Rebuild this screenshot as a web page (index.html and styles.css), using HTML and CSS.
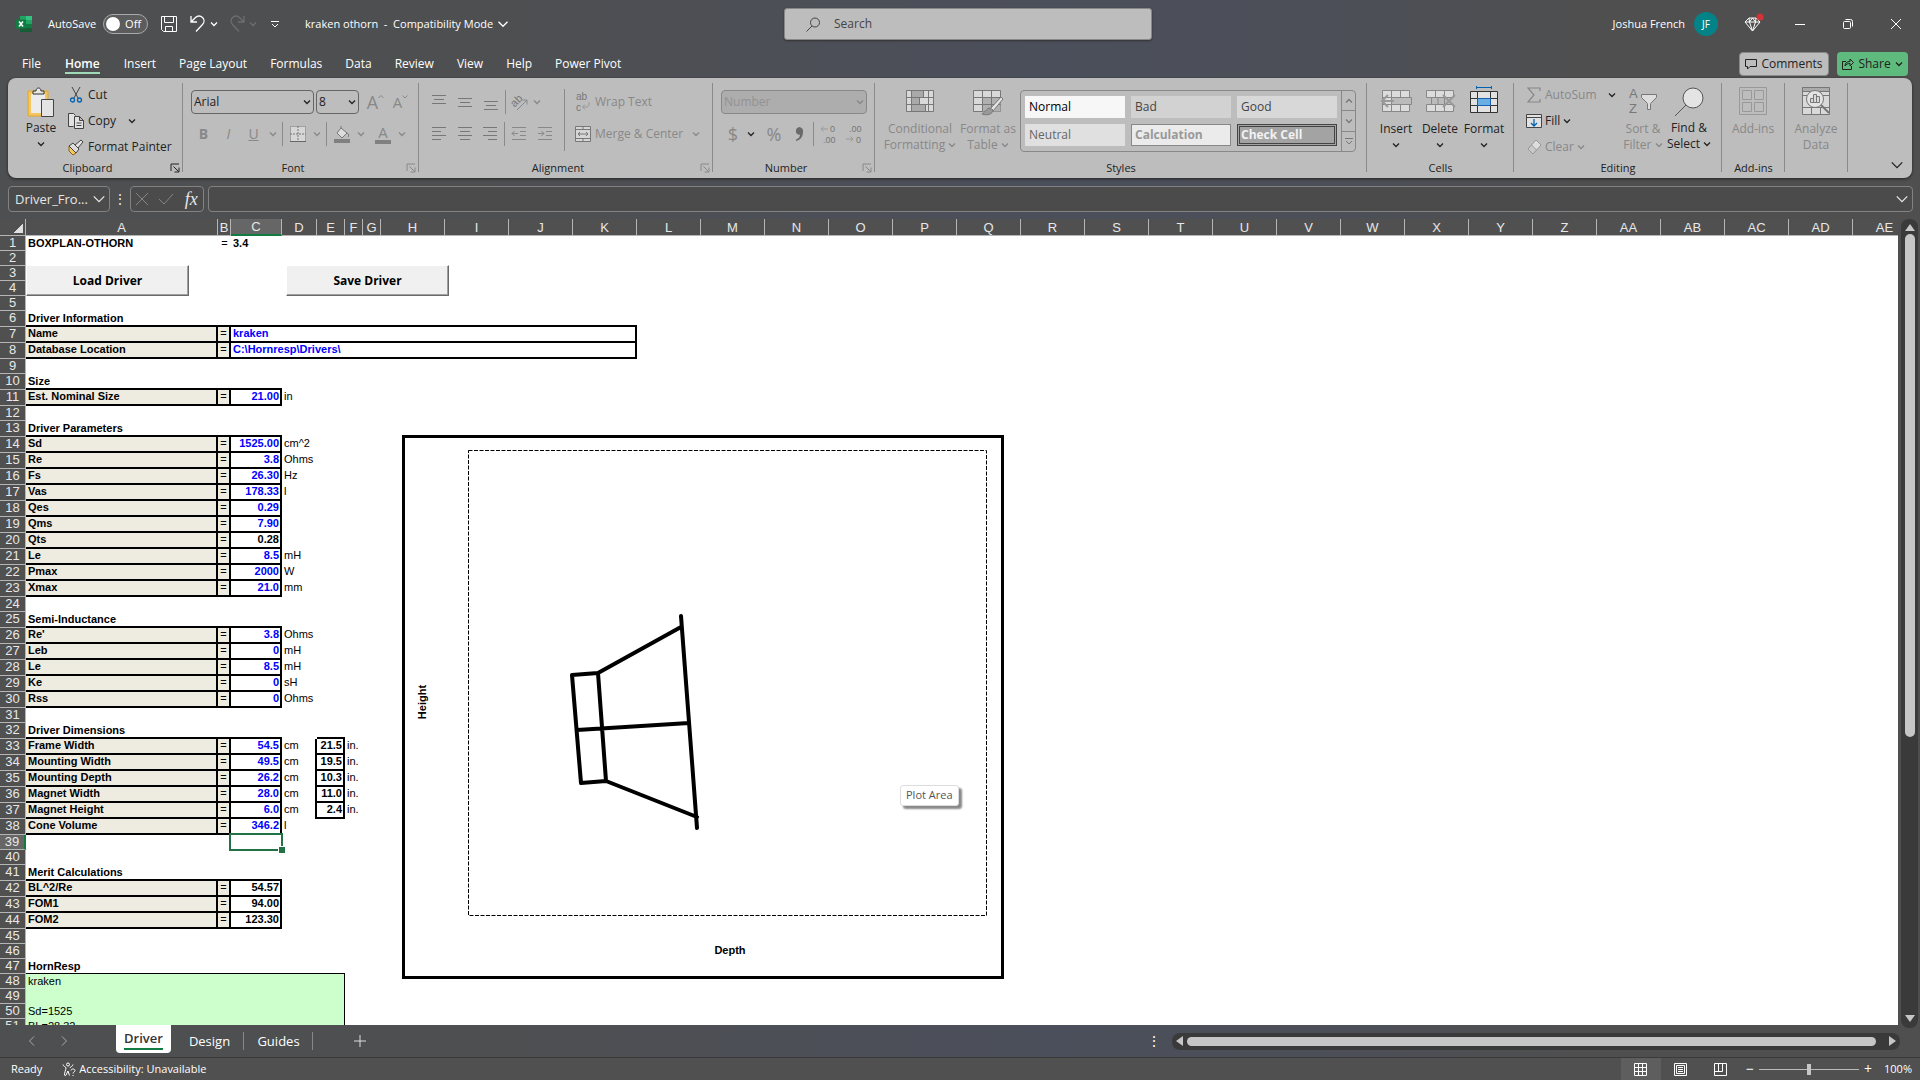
FILE: index.html
```
<!DOCTYPE html>
<html lang="en">
<head>
  <meta charset="UTF-8" />
  <meta name="viewport" content="width=device-width, initial-scale=1.0">
  <title>kraken othorn - Excel</title>
  <link rel="stylesheet" href="styles.css">
</head>
<body>

  <!-- Shared icons -->
  <svg class="defs" aria-hidden="true">
    <symbol id="chev" viewBox="0 0 8 8"><path d="M1 2.500l3 3 3-3" fill="none" stroke="currentColor" stroke-width="1.300" vector-effect="non-scaling-stroke"/></symbol>
    <symbol id="launch" viewBox="0 0 10 10"><path d="M1 8V1h8M3.500 3.500l5 5M9 4.500v4.500H4.500" fill="none" stroke="currentColor"/></symbol>
  </svg>

  <header class="titlebar">
    <div class="title-left">
      <svg class="logo" width="16" height="16" viewBox="0 0 16 16"><path fill="#21a366" d="M4 0h12v16H4z"/><path fill="#33c481" d="M10 0h6v4h-6z"/><path fill="#107c41" d="M4 4h6v8H4zM10 8h6v4h-6z"/><path fill="#185c37" d="M4 12h12v4H4z"/><path fill="#107c41" d="M0 3.500h10v9H0z"/><path d="M3 5.500l4 5M7 5.500l-4 5" stroke="#fff" stroke-width="1.500"/></svg>
      <label class="autosave" for="autosave">AutoSave</label>
      <span class="toggle"><input type="checkbox" id="autosave"><span>Off</span></span>
      <button class="tb save" aria-label="Save"><svg width="16" height="16" viewBox="0 0 16 16" fill="none" stroke="#fff"><path d="M.5.5h15v15h-13l-2-2zM3.500.5v6h9v-6M4.500 15.500v-5h7v5"/></svg></button>
      <button class="tb undo" aria-label="Undo"><svg width="16" height="18" viewBox="0 0 16 18" fill="none" stroke="#fff" stroke-width="1.300"><path d="M1 1v6h6M1 7l4.500-4.500c2-2 5-2 7 0s2 5 0 7L6 16.500"/></svg></button>
      <svg class="chev light" width="8" height="8"><use href="#chev"/></svg>
      <button class="tb redo" aria-label="Redo" disabled><svg width="16" height="18" viewBox="0 0 16 18" fill="none" stroke="#6d6e70" stroke-width="1.300"><path d="M15 1v6H9M15 7l-4.500-4.500c-2-2-5-2-7 0s-2 5 0 7L10 16.500"/></svg></button>
      <svg class="chev faint" width="8" height="8"><use href="#chev"/></svg>
      <button class="tb customize" aria-label="Customize Quick Access Toolbar"><svg width="8" height="8" viewBox="0 0 8 8" fill="none" stroke="#fff"><path d="M0 1.500h8M1 4l3 3 3-3"/></svg></button>
      <button class="doc-title"><span>kraken othorn&nbsp; -&nbsp; Compatibility Mode</span><svg width="12" height="12"><use href="#chev"/></svg></button>
    </div>

    <div class="search">
      <svg width="15" height="15" viewBox="0 0 15 15" fill="none" stroke="#444"><circle cx="9" cy="5.500" r="4.500"/><path d="M6 9l-5.500 5.500"/></svg>
      <input type="text" placeholder="Search" aria-label="Search">
    </div>

    <div class="title-right">
      <span class="user">Joshua French</span>
      <button class="avatar">JF</button>
      <button class="win gem" aria-label="Premium"><svg width="20" height="20" viewBox="0 0 20 20" fill="none" stroke="#fff"><path d="M6 4h7l4 4-7.500 9L2 8zM2 8h15M6.500 8l3 9 3-9M6 4l.5 4 3-4 3 4L13 4"/><circle cx="17" cy="3" r="3.500" fill="#d13438" stroke="none"/></svg></button>
      <button class="win" aria-label="Minimize"><svg width="10" height="10" viewBox="0 0 10 10" stroke="#fff"><path d="M0 5.500h10"/></svg></button>
      <button class="win" aria-label="Restore"><svg width="10" height="10" viewBox="0 0 10 10" fill="none" stroke="#fff"><rect x=".5" y="2.500" width="7" height="7" rx="1"/><path d="M2.500.5h5a2 2 0 0 1 2 2v5"/></svg></button>
      <button class="win" aria-label="Close"><svg width="10" height="10" viewBox="0 0 10 10" stroke="#fff"><path d="M0 0l10 10M10 0L0 10"/></svg></button>
    </div>
  </header>

  <nav class="tabs">
    <a href="#">File</a>
    <a href="#" class="active">Home</a>
    <a href="#">Insert</a>
    <a href="#">Page Layout</a>
    <a href="#">Formulas</a>
    <a href="#">Data</a>
    <a href="#">Review</a>
    <a href="#">View</a>
    <a href="#">Help</a>
    <a href="#">Power Pivot</a>
    <div class="tab-actions">
      <button class="comments"><svg width="12" height="12" viewBox="0 0 12 12" fill="none" stroke="#222"><path d="M.5 1.500h11v7H5l-2.500 2.500V8.500h-2z"/></svg>Comments</button>
      <button class="share"><svg width="12" height="12" viewBox="0 0 12 12" fill="none" stroke="#222"><path d="M4 3.500H.5v8h9V8M3 8c0-3 2-4.500 5-4.500V1l3.500 3.500L8 8V5.500C6 5.500 4 6 3 8z"/></svg>Share<svg width="8" height="8"><use href="#chev"/></svg></button>
    </div>
  </nav>

  <section class="ribbon">
    <div class="group clipboard">
      <div class="body">
        <button class="big tall paste">
          <svg width="30" height="30" viewBox="0 0 30 30"><path d="M2 4h20v25H2z" fill="#f3c65f" stroke="#e0a62c"/><path d="M5 7h14v19H5z" fill="#ececec"/><path d="M7 6V4h3c0-4 5-4 5 0h3v3H7z" fill="#e8e8e8" stroke="#333"/><path d="M15.500 12.500h12v17h-12z" fill="#e4e4e4" stroke="#444"/></svg>
          <span>Paste</span>
          <svg width="8" height="8"><use href="#chev"/></svg>
        </button>
        <div class="stack">
          <button><svg width="16" height="16" viewBox="0 0 16 16" fill="none"><path d="M4 0l6 11M12 0L6 11" stroke="#444"/><circle cx="4.500" cy="13" r="2" stroke="#0063b1" stroke-width="1.300"/><circle cx="11.500" cy="13" r="2" stroke="#0063b1" stroke-width="1.300"/></svg>Cut</button>
          <button><svg width="16" height="16" viewBox="0 0 16 16" fill="#e2e2e2" stroke="#444"><path d="M5.500 13.500h-5V.5h5l2 2"/><path d="M6.500 3.500h5l4 4v8h-9zM11.500 3.500v4h4M8.500 10h5M8.500 12.500h5"/></svg>Copy<svg class="gap" width="8" height="8"><use href="#chev"/></svg></button>
          <button><svg width="16" height="16" viewBox="0 0 16 16"><path d="M1 7l7 7-3 2-4-4z" fill="#f3c65f" stroke="#8a6414"/><path d="M1 7l4-3 6 6-3 4z" fill="#ddd" stroke="#444"/><path d="M7 6l6-5 2 2-5 6z" fill="#e2e2e2" stroke="#444"/></svg>Format Painter</button>
        </div>
      </div>
      <h2>Clipboard</h2>
      <button class="launcher" aria-label="Clipboard options"><svg width="10" height="10"><use href="#launch"/></svg></button>
    </div>

    <div class="group font">
      <div class="body rows">
        <div class="row">
          <span class="combo family"><select aria-label="Font"><option>Arial</option></select><svg width="8" height="8"><use href="#chev"/></svg></span>
          <span class="combo size"><select aria-label="Font size"><option>8</option></select><svg width="8" height="8"><use href="#chev"/></svg></span>
          <button class="ic dim big-a" disabled>A<svg width="6" height="16" viewBox="0 0 6 16" fill="none" stroke="currentColor"><path d="M.5 4L3 1.500 5.500 4"/></svg></button>
          <button class="ic dim small-a" disabled>A<svg width="6" height="16" viewBox="0 0 6 16" fill="none" stroke="currentColor"><path d="M.5 1.500L3 4l2.500-2.500"/></svg></button>
        </div>
        <div class="row dim">
          <button class="ic" disabled><b>B</b></button>
          <button class="ic" disabled><i>I</i></button>
          <button class="ic" disabled><u>U</u></button>
          <svg class="drop" width="8" height="8"><use href="#chev"/></svg>
          <i class="bar"></i>
          <button class="ic" disabled aria-label="Borders"><svg width="16" height="16" viewBox="0 0 16 16" fill="none" stroke="#777"><path d="M.5.5h15v15H.5z" fill="#d6d6d6" stroke-dasharray="1 1"/><path d="M8 0v15M0 8h16" stroke-dasharray="2 1"/><path d="M0 15.500h16" stroke="#666"/></svg></button>
          <svg class="drop" width="8" height="8"><use href="#chev"/></svg>
          <i class="bar"></i>
          <button class="ic" disabled aria-label="Fill color"><svg width="16" height="17" viewBox="0 0 16 17"><path d="M0 13h16v4H0z" fill="#808080"/><path d="M7 2l6 5-5 5-5-5 4-5V0M13 7c2 1 2 3 1 4" fill="#ddd" stroke="#777"/></svg></button>
          <svg class="drop" width="8" height="8"><use href="#chev"/></svg>
          <button class="ic font-color" disabled>A</button>
          <svg class="drop" width="8" height="8"><use href="#chev"/></svg>
        </div>
      </div>
      <h2>Font</h2>
      <button class="launcher dim" aria-label="Font options"><svg width="10" height="10"><use href="#launch"/></svg></button>
    </div>

    <div class="group alignment">
      <div class="body dim">
        <div class="rows block">
          <div class="row">
            <button class="ic" disabled aria-label="Top"><svg width="16" height="16" viewBox="0 0 16 16" stroke="#777"><path d="M1 1.500h14M3 5.500h10M1 9.500h14"/></svg></button>
            <button class="ic" disabled aria-label="Middle"><svg width="16" height="16" viewBox="0 0 16 16" stroke="#777"><path d="M1 4.500h14M3 8.500h10M1 12.500h14"/></svg></button>
            <button class="ic" disabled aria-label="Bottom"><svg width="16" height="16" viewBox="0 0 16 16" stroke="#777"><path d="M1 7.500h14M3 11.500h10M1 15.500h14"/></svg></button>
            <i class="bar"></i>
            <button class="ic" disabled aria-label="Orientation"><svg width="18" height="18" viewBox="0 0 18 18" fill="none" stroke="#888"><text x="0" y="12" transform="rotate(-45 5 9)" font-size="11">ab</text><path d="M6 17L16 7M11.500 7H16v4.500"/></svg></button>
            <svg class="drop tight" width="8" height="8"><use href="#chev"/></svg>
          </div>
          <div class="row">
            <button class="ic" disabled aria-label="Left"><svg width="16" height="16" viewBox="0 0 16 16" stroke="#777"><path d="M1 1.500h14M1 5.500h9M1 9.500h14M1 13.500h9"/></svg></button>
            <button class="ic" disabled aria-label="Center"><svg width="16" height="16" viewBox="0 0 16 16" stroke="#777"><path d="M1 1.500h14M3 5.500h10M1 9.500h14M3 13.500h10"/></svg></button>
            <button class="ic" disabled aria-label="Right"><svg width="16" height="16" viewBox="0 0 16 16" stroke="#777"><path d="M1 1.500h14M6 5.500h9M1 9.500h14M6 13.500h9"/></svg></button>
            <i class="bar"></i>
            <button class="ic" disabled aria-label="Decrease indent"><svg width="16" height="16" viewBox="0 0 16 16" fill="none" stroke="#888"><path d="M1 1.500h14M9 5.500h6M9 9.500h6M1 13.500h14M7 7.500H1M3.500 5L1 7.500 3.500 10"/></svg></button>
            <button class="ic" disabled aria-label="Increase indent"><svg width="16" height="16" viewBox="0 0 16 16" fill="none" stroke="#888"><path d="M1 1.500h14M9 5.500h6M9 9.500h6M1 13.500h14M1 7.500h6M4.500 5L7 7.500 4.500 10"/></svg></button>
          </div>
        </div>
        <div class="rows wrap">
          <div class="row"><button disabled><svg width="16" height="20" viewBox="0 0 16 20" fill="none" stroke="#999"><text x="1" y="8" font-size="10">ab</text><text x="1" y="19" font-size="10">c</text><path d="M14 10v2c0 2-1 3-3 3H8M10 12.500L7.500 15l2.500 2.500"/></svg>Wrap Text</button></div>
          <div class="row"><button disabled><svg width="16" height="16" viewBox="0 0 16 16" fill="#d6d6d6" stroke="#777"><path d="M.5.5h15v15H.5zM.5 3.500h15M.5 12.500h15M8 .5v3M8 12.500v3M3 8h10M5 6L3 8l2 2M11 6l2 2-2 2"/></svg>Merge &amp; Center</button><svg class="drop" width="8" height="8"><use href="#chev"/></svg></div>
        </div>
      </div>
      <h2>Alignment</h2>
      <button class="launcher dim" aria-label="Alignment options"><svg width="10" height="10"><use href="#launch"/></svg></button>
    </div>

    <div class="group number">
      <div class="body rows dim">
        <div class="row"><span class="combo format"><select aria-label="Number format" disabled><option>Number</option></select><svg width="8" height="8"><use href="#chev"/></svg></span></div>
        <div class="row">
          <button class="ic sign" disabled>$</button>
          <svg class="drop dark" width="8" height="8"><use href="#chev"/></svg>
          <button class="ic sign" disabled>%</button>
          <button class="ic comma" disabled aria-label="Comma style"><svg width="8" height="14" viewBox="0 0 8 14"><path d="M4 0a4 4 0 0 0-1 7.500c1 .5 2 0 2 0 0 2-1 4-4 5v1.500c5-1 7-5 7-9A4 4 0 0 0 4 0z" fill="#6a6a6a"/></svg></button>
          <i class="bar"></i>
          <button class="ic" disabled aria-label="Increase decimal"><svg width="17" height="20" viewBox="0 0 17 20" fill="none" stroke="#999"><text x="10" y="8" font-size="9">0</text><text x="3" y="19" font-size="9">.00</text><path d="M8 5H1M3.500 2.500L1 5l2.500 2.500"/></svg></button>
          <button class="ic" disabled aria-label="Decrease decimal"><svg width="17" height="20" viewBox="0 0 17 20" fill="none" stroke="#999"><text x="3" y="8" font-size="9">.00</text><text x="10" y="19" font-size="9">0</text><path d="M0 15h7M4.500 12.500L7 15l-2.500 2.500"/></svg></button>
        </div>
      </div>
      <h2>Number</h2>
      <button class="launcher dim" aria-label="Number options"><svg width="10" height="10"><use href="#launch"/></svg></button>
    </div>

    <div class="group styles">
      <div class="body">
        <button class="big dim" disabled>
          <svg width="28" height="28" viewBox="0 0 28 28" fill="#d9d9d9" stroke="#777"><path d="M.5 3.500h27v21H.5z"/><path d="M5.500 3.500h12v7h-12zM5.500 10.500h8v7h-8zM5.500 17.500h14v7h-14z" fill="#a9a9a9"/><path d="M5.500 3.500v21M22.500 3.500v21M.5 10.500h27M.5 17.500h27" fill="none"/></svg>
          <span>Conditional<br>Formatting <svg width="8" height="8"><use href="#chev"/></svg></span>
        </button>
        <button class="big dim" disabled>
          <svg width="30" height="28" viewBox="0 0 30 28" fill="#d9d9d9" stroke="#777"><path d="M.5 3.500h27v21H.5z"/><path d="M9.500 10.500h18v14h-18z" fill="#b0b0b0" stroke="none"/><path d="M9.500 3.500v21M18.500 3.500v21M.5 10.500h27M.5 17.500h27" fill="none"/><path d="M28 10L17 22l3 2 10-12z" fill="#e3e3e3"/><path d="M17 21c-3 0-4 3-8 6 5 2 11 0 11-4z" fill="#999"/></svg>
          <span>Format as<br>Table <svg width="8" height="8"><use href="#chev"/></svg></span>
        </button>
        <div class="gallery">
          <div class="swatches">
            <button class="normal">Normal</button>
            <button class="bad">Bad</button>
            <button class="good">Good</button>
            <button class="neutral">Neutral</button>
            <button class="calc">Calculation</button>
            <button class="check">Check Cell</button>
          </div>
          <div class="gallery-nav">
            <button aria-label="Previous styles"><svg class="flip" width="8" height="8"><use href="#chev"/></svg></button>
            <button aria-label="Next styles"><svg width="8" height="8"><use href="#chev"/></svg></button>
            <button aria-label="More styles"><svg width="8" height="8" viewBox="0 0 8 8" fill="none" stroke="currentColor"><path d="M0 1.500h8M1 4l3 3 3-3"/></svg></button>
          </div>
        </div>
      </div>
      <h2>Styles</h2>
    </div>

    <div class="group cells">
      <div class="body">
        <button class="big">
          <svg width="32" height="28" viewBox="0 0 32 28" fill="#dcdcdc" stroke="#888"><path d="M2.500 3.500h27v21h-27zM11.500 3.500v21M20.500 3.500v21M2.500 10.500h27M2.500 17.500h27"/><path d="M11.500 10.500h20v7h-20z" fill="#bbb"/><path d="M14 14H2M8 8l-6 6 6 6" fill="none" stroke="#999" stroke-width="2"/></svg>
          <span>Insert</span><svg width="8" height="8"><use href="#chev"/></svg>
        </button>
        <button class="big">
          <svg width="32" height="28" viewBox="0 0 32 28" fill="#dcdcdc" stroke="#888"><path d="M2.500 3.500h27v7h-27zM2.500 17.500h27v7h-27zM11.500 3.500v7M20.500 3.500v7M11.500 17.500v7M20.500 17.500v7"/><path d="M7.500 10.500h13v7h-13zM14 10.500v7" fill="#bbb"/><path d="M19 8l12 12M31 8L19 20" fill="none" stroke="#999" stroke-width="2"/></svg>
          <span>Delete</span><svg width="8" height="8"><use href="#chev"/></svg>
        </button>
        <button class="big">
          <svg width="28" height="28" viewBox="0 0 28 28" fill="#e2e2e2" stroke="#333"><path d="M.5 4.500h27v21H.5zM7.500 4.500v21M20.500 4.500v21M.5 11.500h27M.5 18.500h27"/><path d="M7.500 11.500h13v7h-13z" fill="#69afe5" stroke="#1a5fb4"/><path d="M6.500-1v3M21.500-1v3M6.500.5h15" stroke="#0063b1"/></svg>
          <span>Format</span><svg width="8" height="8"><use href="#chev"/></svg>
        </button>
      </div>
      <h2>Cells</h2>
    </div>

    <div class="group editing">
      <div class="body">
        <div class="stack">
          <button class="dim" disabled><svg width="16" height="16" viewBox="0 0 16 16" fill="none" stroke="#888" stroke-width="1.200"><path d="M14 4V1H2l6 7-6 7h12v-3"/></svg>AutoSum<svg class="gap dark" width="8" height="8"><use href="#chev"/></svg></button>
          <button><svg width="16" height="16" viewBox="0 0 16 16" fill="#e2e2e2" stroke="#444"><path d="M.5 1.500h15v13H.5zM.5 4.500h15"/><path d="M8 6v7M5 10l3 3 3-3" fill="none" stroke="#0063b1" stroke-width="1.300"/></svg>Fill<svg width="8" height="8"><use href="#chev"/></svg></button>
          <button class="dim" disabled><svg width="16" height="16" viewBox="0 0 16 16" fill="#dedede" stroke="#999"><path d="M10 1l5 5-8 9-5-5z"/><path d="M5.500 6l5 5L7 15l-5-5z" fill="#c9c9c9"/></svg>Clear<svg width="8" height="8"><use href="#chev"/></svg></button>
        </div>
        <button class="big dim" disabled>
          <svg width="30" height="28" viewBox="0 0 30 28" fill="none" stroke="#777"><text x="1" y="11" font-size="13">A</text><text x="1" y="26" font-size="13">Z</text><path d="M13.500 7.500h15v3l-6 6v6h-3v-6l-6-6z" fill="#dedede"/></svg>
          <span>Sort &amp;<br>Filter <svg width="8" height="8"><use href="#chev"/></svg></span>
        </button>
        <button class="big tall">
          <svg width="30" height="30" viewBox="0 0 30 30" fill="#e4e4e4" stroke="#555"><circle cx="19" cy="11" r="10"/><path d="M12 18L1 29"/></svg>
          <span>Find &amp;<br>Select <svg width="8" height="8"><use href="#chev"/></svg></span>
        </button>
      </div>
      <h2>Editing</h2>
    </div>

    <div class="group addins">
      <div class="body">
        <button class="big dim" disabled>
          <svg width="28" height="28" viewBox="0 0 28 28" fill="none" stroke="#999"><path d="M.5.5h27v27H.5zM3.500 3.500h9v9h-9zM15.500 3.500h9v9h-9zM3.500 15.500h9v9h-9zM15.500 15.500h9v9h-9z"/></svg>
          <span>Add-ins</span>
        </button>
      </div>
      <h2>Add-ins</h2>
    </div>

    <div class="group analyze">
      <div class="body">
        <button class="big dim" disabled>
          <svg width="28" height="28" viewBox="0 0 28 28" fill="#d9d9d9" stroke="#777"><path d="M.5.5h27v27H.5zM.5 8.500h27M.5 20.500h27M9.500 20v7M18.500 20v7"/><path d="M.5.5h27v4H.5z" fill="#aaa"/><circle cx="13" cy="12" r="8.500" fill="#e4e4e4"/><path d="M19 18l8 8" stroke-width="2"/><path d="M8.500 11.500h3v4h-3zM11.500 7.500h3v8h-3zM14.500 9.500h3v6h-3z"/></svg>
          <span>Analyze<br>Data</span>
        </button>
      </div>
    </div>
    <button class="collapse" aria-label="Collapse ribbon"><svg width="14" height="14"><use href="#chev"/></svg></button>
  </section>

  <section class="formula-bar">
    <div class="name-box"><input type="text" value="Driver_Fro..." aria-label="Name box"><svg width="14" height="14"><use href="#chev"/></svg></div>
    <span class="dots">⋮</span>
    <div class="fx">
      <button aria-label="Cancel"><svg width="12" height="12" viewBox="0 0 12 12" stroke="#858585"><path d="M0 0l12 12M12 0L0 12"/></svg></button>
      <button aria-label="Enter"><svg width="16" height="12" viewBox="0 0 16 12" fill="none" stroke="#858585"><path d="M1 6l5 5L15 1"/></svg></button>
      <button class="fn">fx</button>
    </div>
    <div class="formula"><input type="text" aria-label="Formula"><svg width="14" height="14"><use href="#chev"/></svg></div>
  </section>

  <main class="workspace">
    <div class="sheet">
      <table>
        <colgroup>
          <col class="w-head"><col class="w-a"><col class="w-b"><col class="w-c"><col class="w-d"><col class="w-e"><col class="w-f"><col class="w-f">
          <col class="w-std" span="24">
        </colgroup>
        <thead>
          <tr>
            <th class="corner"></th><th>A</th><th>B</th><th class="current">C</th><th>D</th><th>E</th><th>F</th><th>G</th><th>H</th><th>I</th><th>J</th><th>K</th><th>L</th><th>M</th><th>N</th><th>O</th><th>P</th><th>Q</th><th>R</th><th>S</th><th>T</th><th>U</th><th>V</th><th>W</th><th>X</th><th>Y</th><th>Z</th><th>AA</th><th>AB</th><th>AC</th><th>AD</th><th>AE</th>
          </tr>
        </thead>
        <tbody>
          <tr><th>1</th><td class="head">BOXPLAN-OTHORN</td><td class="eq">=</td><td class="head">3.4</td></tr>
          <tr><th>2</th></tr>
          <tr><th>3</th></tr>
          <tr><th>4</th></tr>
          <tr><th>5</th></tr>
          <tr class="top wide"><th>6</th><td>Driver Information</td><td></td><td colspan="9"></td></tr>
          <tr class="data wide"><th>7</th><td>Name</td><td>=</td><td colspan="9">kraken</td></tr>
          <tr class="data wide"><th>8</th><td>Database Location</td><td>=</td><td colspan="9">C:\Hornresp\Drivers\</td></tr>
          <tr><th>9</th></tr>
          <tr class="top"><th>10</th><td>Size</td><td></td><td></td></tr>
          <tr class="data"><th>11</th><td>Est. Nominal Size</td><td>=</td><td>21.00</td><td>in</td></tr>
          <tr><th>12</th></tr>
          <tr class="top"><th>13</th><td>Driver Parameters</td><td></td><td></td></tr>
          <tr class="data"><th>14</th><td>Sd</td><td>=</td><td>1525.00</td><td>cm^2</td></tr>
          <tr class="data"><th>15</th><td>Re</td><td>=</td><td>3.8</td><td>Ohms</td></tr>
          <tr class="data"><th>16</th><td>Fs</td><td>=</td><td>26.30</td><td>Hz</td></tr>
          <tr class="data"><th>17</th><td>Vas</td><td>=</td><td>178.33</td><td>l</td></tr>
          <tr class="data"><th>18</th><td>Qes</td><td>=</td><td>0.29</td></tr>
          <tr class="data"><th>19</th><td>Qms</td><td>=</td><td>7.90</td></tr>
          <tr class="data calc-row"><th>20</th><td>Qts</td><td>=</td><td>0.28</td></tr>
          <tr class="data"><th>21</th><td>Le</td><td>=</td><td>8.5</td><td>mH</td></tr>
          <tr class="data"><th>22</th><td>Pmax</td><td>=</td><td>2000</td><td>W</td></tr>
          <tr class="data"><th>23</th><td>Xmax</td><td>=</td><td>21.0</td><td>mm</td></tr>
          <tr><th>24</th></tr>
          <tr class="top"><th>25</th><td>Semi-Inductance</td><td></td><td></td></tr>
          <tr class="data"><th>26</th><td>Re'</td><td>=</td><td>3.8</td><td>Ohms</td></tr>
          <tr class="data"><th>27</th><td>Leb</td><td>=</td><td>0</td><td>mH</td></tr>
          <tr class="data"><th>28</th><td>Le</td><td>=</td><td>8.5</td><td>mH</td></tr>
          <tr class="data"><th>29</th><td>Ke</td><td>=</td><td>0</td><td>sH</td></tr>
          <tr class="data"><th>30</th><td>Rss</td><td>=</td><td>0</td><td>Ohms</td></tr>
          <tr><th>31</th></tr>
          <tr class="top inches"><th>32</th><td>Driver Dimensions</td><td></td><td></td><td></td><td></td></tr>
          <tr class="data inches"><th>33</th><td>Frame Width</td><td>=</td><td>54.5</td><td>cm</td><td>21.5</td><td>in.</td></tr>
          <tr class="data inches"><th>34</th><td>Mounting Width</td><td>=</td><td>49.5</td><td>cm</td><td>19.5</td><td>in.</td></tr>
          <tr class="data inches"><th>35</th><td>Mounting Depth</td><td>=</td><td>26.2</td><td>cm</td><td>10.3</td><td>in.</td></tr>
          <tr class="data inches"><th>36</th><td>Magnet Width</td><td>=</td><td>28.0</td><td>cm</td><td>11.0</td><td>in.</td></tr>
          <tr class="data inches"><th>37</th><td>Magnet Height</td><td>=</td><td>6.0</td><td>cm</td><td>2.4</td><td>in.</td></tr>
          <tr class="data"><th>38</th><td>Cone Volume</td><td>=</td><td>346.2</td><td>l</td></tr>
          <tr><th class="current">39</th><td></td><td></td><td class="selected"></td></tr>
          <tr><th>40</th></tr>
          <tr class="top"><th>41</th><td>Merit Calculations</td><td></td><td></td></tr>
          <tr class="data calc-row"><th>42</th><td>BL^2/Re</td><td>=</td><td>54.57</td></tr>
          <tr class="data calc-row"><th>43</th><td>FOM1</td><td>=</td><td>94.00</td></tr>
          <tr class="data calc-row"><th>44</th><td>FOM2</td><td>=</td><td>123.30</td></tr>
          <tr><th>45</th></tr>
          <tr><th>46</th></tr>
          <tr class="export-top"><th>47</th><td colspan="5">HornResp</td></tr>
          <tr class="export"><th>48</th><td colspan="5">kraken</td></tr>
          <tr class="export"><th>49</th><td colspan="5"></td></tr>
          <tr class="export"><th>50</th><td colspan="5">Sd=1525</td></tr>
          <tr class="export"><th>51</th><td colspan="5">BL=28.32</td></tr>
        </tbody>
      </table>

      <!-- Objects floating on the sheet -->
      <button class="macro load">Load Driver</button>
      <button class="macro store">Save Driver</button>
      <svg class="chart" viewBox="0 0 602 544" role="img" aria-label="Driver side view">
        <rect x="1.500" y="1.500" width="599" height="541" fill="#fff" stroke="#000" stroke-width="3"/>
        <rect x="66.500" y="15.500" width="518" height="465" fill="none" stroke="#000" stroke-dasharray="4 1.500"/>
        <g fill="none" stroke="#000" stroke-width="4" stroke-linecap="round" stroke-linejoin="round">
          <path d="M279 181l16 212M279 192l-83 46-26 2 9 108 25-2 91 36M196 238l8 108M175 295l112-7"/>
        </g>
        <text x="328" y="519" text-anchor="middle">Depth</text>
        <text x="24" y="267" text-anchor="middle" transform="rotate(-90 24 267)">Height</text>
      </svg>
      <span class="tooltip">Plot Area</span>
    </div>
    <div class="vscroll"><span class="arrow up"></span><span class="thumb"></span><span class="arrow down"></span></div>
  </main>

  <footer class="sheet-tabs">
    <button class="nav" aria-label="Previous sheet"><svg width="8" height="10" viewBox="0 0 8 10" fill="none" stroke="#aaa"><path d="M6 .5L1.500 5 6 9.500"/></svg></button>
    <button class="nav" aria-label="Next sheet"><svg width="8" height="10" viewBox="0 0 8 10" fill="none" stroke="#aaa"><path d="M2 .5L6.500 5 2 9.500"/></svg></button>
    <a href="#" class="sheet-tab active"><span>Driver</span></a>
    <a href="#" class="sheet-tab">Design</a>
    <a href="#" class="sheet-tab">Guides</a>
    <button class="add" aria-label="New sheet"><svg width="12" height="12" viewBox="0 0 12 12" stroke="#ddd"><path d="M6 0v12M0 6h12"/></svg></button>
    <span class="dots">⋮</span>
    <div class="hscroll"><span class="arrow left"></span><span class="thumb"></span><span class="arrow right"></span></div>
  </footer>

  <footer class="status">
    <span>Ready</span>
    <span class="access"><svg width="14" height="15" viewBox="0 0 14 15" fill="none" stroke="#fff"><circle cx="6" cy="2.500" r="1.500"/><path d="M1 2.500c0 2 3 2 3 3.500S2 12 2.500 13s1.500 1 2-1L6 9M11 2.500C11 4.500 8 4.500 8 6M9 8.500c0-2 4-2 4 0 0 1.500-2 1.500-2 3M11 13v1M6 9l1.500 4.500"/></svg>Accessibility: Unavailable</span>
    <div class="views">
      <button class="on" aria-label="Normal view"><svg width="13" height="13" viewBox="0 0 13 13" fill="none" stroke="#fff"><path d="M.5.5h12v12H.5zM4.500.5v12M8.500.5v12M.5 4.500h12M.5 8.500h12"/></svg></button>
      <button aria-label="Page layout view"><svg width="13" height="13" viewBox="0 0 13 13" fill="none" stroke="#fff"><path d="M.5.5h12v12H.5zM2.500 2.500h8v8h-8zM4 4.500h5M4 6.500h5M4 8.500h5"/></svg></button>
      <button aria-label="Page break view"><svg width="13" height="13" viewBox="0 0 13 13" fill="none" stroke="#fff"><path d="M.5.5h12v12H.5zM4.500.5v8M8.500.5v8h-8"/></svg></button>
    </div>
    <div class="zoom"><span>−</span><input type="range" min="10" max="190" value="100" aria-label="Zoom"><span>+</span></div>
    <span class="percent">100%</span>
  </footer>

</body>
</html>
```
FILE: styles.css
```
* {
  box-sizing: border-box;
}

body {
  margin: 0;
  height: 100vh;
  display: flex;
  flex-direction: column;
  overflow: hidden;
  font-family: "Open Sans", "Noto Sans", sans-serif;
  font-size: 12px;
  line-height: 16px;
  color: #fff;
  background: linear-gradient(90deg, #4e4f51 0%, #4e4f51 25%, #4b4f5b 55%, #4c4f57 70%, #4f4f50 82%, #4f4f50 100%);
}

button, input, select {
  font: inherit;
  color: inherit;
  background: none;
  border: none;
  padding: 0;
  margin: 0;
}

button {
  display: inline-flex;
  align-items: center;
  justify-content: center;
  white-space: nowrap;
}

a {
  color: inherit;
  text-decoration: none;
}

svg {
  flex: none;
  overflow: visible;
}

.defs {
  display: none;
}

/* Title bar */
.titlebar {
  display: grid;
  grid-template-columns: 1fr 368px 1fr;
  align-items: center;
  height: 48px;
  padding-left: 16px;
  font-size: 11px;
  flex: none;
}

.title-left,
.title-right {
  display: flex;
  align-items: center;
}

.title-right {
  justify-content: flex-end;
}

.autosave {
  margin: 0 7px 0 16px;
}

.toggle {
  position: relative;
  display: flex;
  align-items: center;
  justify-content: flex-end;
  width: 45px;
  height: 20px;
  padding-right: 6px;
  border: 1px solid #aaa;
  border-radius: 10px;
  background: #5c5c5c;
}

.toggle input {
  position: absolute;
  left: 2px;
  top: 2px;
  width: 14px;
  height: 14px;
  appearance: none;
  background: #fff;
  border-radius: 50%;
}

.save {
  margin-left: 13px;
}

.undo {
  margin-left: 13px;
  margin-right: 4px;
}

.redo {
  margin: 0 4px 0 11px;
}

.chev.faint {
  color: #6d6e70;
}

.customize {
  margin-left: 14px;
}

.doc-title {
  margin-left: 26px;
  gap: 4px;
}

.search {
  display: flex;
  align-items: center;
  gap: 13px;
  height: 32px;
  padding-left: 21px;
  background: #bdbdbd;
  border: 1px solid #888;
  border-radius: 3px;
  font-size: 12px;
  color: #444;
  box-shadow: 0 1px 2px #333;
}

.search input {
  flex: 1;
}

.search input::placeholder {
  color: #444;
  opacity: 1;
}

.avatar {
  width: 24px;
  height: 24px;
  margin: 0 12px 0 9px;
  border-radius: 50%;
  background: #038387;
  font-size: 10px;
}

.win {
  width: 48px;
  height: 48px;
}

.win.gem {
  width: 46px;
}

/* Ribbon tabs */
.tabs {
  display: flex;
  align-items: center;
  gap: 23px;
  height: 30px;
  padding: 2px 12px 0 22px;
  flex: none;
}

.tabs .active {
  margin: 0 1px;
  font-weight: 600;
  box-shadow: 0 2px 0 #9fd9b8;
}

.tab-actions {
  display: flex;
  gap: 8px;
  margin-left: auto;
}

.tab-actions button {
  height: 24px;
  gap: 4px;
  border-radius: 4px;
  color: #222;
}

.comments {
  width: 90px;
  background: #bdbdbd;
  border: 1px solid #8a8a8a;
}

.share {
  width: 71px;
  background: #5fba7d;
}

/* Ribbon */
.ribbon {
  position: relative;
  display: flex;
  height: 100px;
  margin: 0 8px;
  padding: 4px 0 1px;
  flex: none;
  background: #bdbdbd;
  border-radius: 8px;
  box-shadow: 0 1px 3px #222;
  color: #222;
}

.ribbon text {
  font-family: "Liberation Sans", Arial, sans-serif;
  fill: #777;
  stroke: none;
}

.group {
  position: relative;
  flex: none;
}

.group::after {
  content: "";
  position: absolute;
  right: 0;
  top: 1px;
  bottom: 5px;
  width: 1px;
  background: #8a8a8a;
}

.group h2 {
  margin: 0;
  font-size: 11px;
  font-weight: 400;
  line-height: 16px;
  text-align: center;
}

.clipboard h2,
.font h2,
.alignment h2,
.number h2 {
  padding-right: 16px;
}

.body {
  display: flex;
  height: 78px;
}

.launcher {
  position: absolute;
  right: 3px;
  bottom: 4px;
}

.dim,
.dim button {
  color: #888;
}

.dark {
  color: #222;
}

.rows {
  flex-direction: column;
  padding-top: 4px;
}

.row {
  display: flex;
  align-items: center;
  height: 32px;
}

.stack {
  display: flex;
  flex-direction: column;
  align-items: flex-start;
}

.stack button {
  height: 26px;
  gap: 4px;
}

.stack .gap {
  margin-left: 8px;
}

.big {
  flex-direction: column;
  justify-content: flex-start;
  padding-top: 5px;
}

.big > svg:first-child {
  margin-bottom: 6px;
}

.tall > svg:first-child {
  margin-bottom: 3px;
}

.big > svg:last-child {
  margin-top: 4px;
}

.ic {
  width: 26px;
  height: 26px;
}

.bar {
  width: 1px;
  height: 24px;
  margin: 0 2px;
  background: #8a8a8a;
}

.drop {
  margin: 0 3px;
}

.combo {
  position: relative;
  display: flex;
  align-items: center;
  height: 24px;
  border: 1px solid #666;
  border-radius: 4px;
}

.combo select {
  appearance: none;
  width: 100%;
  height: 100%;
  padding-left: 2px;
}

.combo svg {
  position: absolute;
  right: 2px;
}

.clipboard {
  width: 175px;
}

.paste {
  width: 40px;
  margin-left: 13px;
  margin-right: 7px;
}

.font {
  width: 236px;
}

.font .body,
.number .body {
  padding-left: 8px;
}

.family {
  width: 123px;
  margin-right: 2px;
}

.size {
  width: 43px;
  margin-right: 4px;
}

.font .ic {
  width: 25px;
  font-size: 14px;
}

.font .big-a {
  font-size: 18px;
}

.font .small-a {
  font-size: 15px;
}

.font .font-color {
  height: 20px;
  width: 16px;
  margin: 0 4px 0 7px;
  font-size: 15px;
  border-bottom: 4px solid #808080;
}

.alignment {
  width: 294px;
}

.alignment .block {
  width: 139px;
  margin-right: 17px;
  padding-left: 7px;
  position: relative;
}

.alignment .block::after {
  content: "";
  position: absolute;
  right: -7px;
  top: 7px;
  height: 62px;
  width: 1px;
  background: #8a8a8a;
}

.alignment .bar {
  margin: 0 1px;
}

.wrap button {
  gap: 4px;
}

.wrap .drop {
  margin-left: 9px;
}

.tight {
  margin: 0;
}

.number {
  width: 162px;
}

.format {
  width: 146px;
  background: #adadad;
  border-color: #888;
}

.sign {
  width: 24px;
  font-size: 18px;
  color: #666;
}

.number .bar {
  margin: 0 1px;
}

.number .drop {
  margin: 0 7px 0 2px;
}

.styles {
  width: 492px;
}

.styles .big:nth-child(1) {
  width: 76px;
  margin-left: 7px;
}

.styles .big:nth-child(2) {
  width: 60px;
}

.gallery {
  display: flex;
  width: 336px;
  height: 62px;
  margin: 8px 0 0 2px;
  border: 1px solid #888;
  border-radius: 4px;
}

.swatches {
  flex: 1;
  display: grid;
  grid-template-columns: repeat(3, 100px);
  grid-auto-rows: 22px;
  gap: 6px;
  padding: 5px 4px;
}

.swatches button {
  justify-content: flex-start;
  padding-left: 4px;
}

.normal {
  background: #f7f7f7;
  color: #000;
}

.bad {
  background: #d2d2d2;
  color: #444;
}

.good {
  background: #d8d8d8;
  color: #444;
}

.neutral {
  background: #e0e0e0;
  color: #666;
}

.swatches .calc {
  padding-left: 3px;
  background: #ebebeb;
  border: 1px solid #888;
  color: #999;
  font-weight: 700;
}

.swatches .check {
  padding-left: 1px;
  background: #a3a3a3;
  border: 3px double #444;
  color: #f2f2f2;
  font-weight: 700;
}

.gallery-nav {
  display: flex;
  flex-direction: column;
  width: 14px;
  border-left: 1px solid #888;
  color: #777;
}

.gallery-nav button {
  flex: 1;
}

.gallery-nav button + button {
  border-top: 1px solid #888;
}

.flip {
  transform: rotate(180deg);
}

.cells {
  width: 147px;
}

.cells .body {
  padding-left: 7px;
}

.cells .big {
  width: 44px;
}

.editing {
  width: 208px;
}

.editing .stack {
  width: 94px;
  margin-left: 12px;
}

.editing .stack button {
  gap: 3px;
}

.editing .big {
  width: 46px;
}

.addins,
.analyze {
  width: 63px;
}

.addins .big,
.analyze .big {
  width: 62px;
}

.collapse {
  position: absolute;
  right: 8px;
  bottom: 6px;
}

/* Formula bar */
.formula-bar {
  display: flex;
  align-items: center;
  height: 26px;
  margin: 8px 7px 7px 8px;
  flex: none;
  color: #e6e6e6;
}

.name-box,
.fx,
.formula {
  display: flex;
  align-items: center;
  height: 26px;
  background: #4b4b4b;
  border: 1px solid #828282;
  border-radius: 4px;
}

.name-box {
  width: 102px;
  padding: 0 4px 0 6px;
  font-size: 13px;
}

.name-box input {
  width: 77px;
}

.dots {
  width: 20px;
  text-align: center;
  font-size: 14px;
}

.fx {
  width: 74px;
  justify-content: space-around;
  margin-right: 4px;
}

.fn {
  font-family: "Liberation Serif", serif;
  font-style: italic;
  font-size: 18px;
}

.formula {
  flex: 1;
  padding-right: 3px;
}

.formula input {
  flex: 1;
}

/* Worksheet */
.workspace {
  display: flex;
  flex: 1;
  min-height: 0;
}

.sheet {
  position: relative;
  flex: 1;
  min-width: 0;
  overflow: hidden;
  background: linear-gradient(#505050 17px, #fff 17px);
  color: #000;
  font-family: "Liberation Sans", Arial, sans-serif;
  font-size: 11px;
}

table {
  table-layout: fixed;
  width: 1px;
  border-collapse: separate;
  border-spacing: 0;
}

.w-head { width: 26px; }
.w-a { width: 192px; }
.w-b { width: 13px; }
.w-c { width: 51px; }
.w-d { width: 35px; }
.w-e { width: 28px; }
.w-f { width: 18px; }
.w-std { width: 64px; }

tr {
  height: 15px;
}

thead tr {
  height: 17px;
}

.top,
.data {
  height: 16px;
}

th,
td {
  padding: 0;
  line-height: 13px;
  white-space: nowrap;
}

th {
  font-size: 13px;
  font-weight: 400;
  color: #e8e8e8;
  background: #505050;
  border-right: 1px solid #b5b5b5;
  border-bottom: 1px solid #b5b5b5;
}

tbody th {
  vertical-align: top;
}

th.current {
  background: #666;
}

thead th.current {
  border-bottom: 2px solid #107c41;
}

tbody th.current {
  border-right: 2px solid #107c41;
}

.corner {
  background: linear-gradient(135deg, transparent 50%, #e0e0e0 50%) 13px 4px / 10px 10px no-repeat #505050;
}

td {
  padding-left: 2px;
}

.head,
.top td,
.export-top td {
  font-weight: 700;
}

.eq,
.data td:nth-child(3) {
  padding: 0;
  text-align: center;
}

.data td {
  vertical-align: top;
}

.top td:nth-child(-n+4),
.data td:nth-child(-n+4) {
  border-bottom: 2px solid #000;
}

.data td:nth-child(-n+4) {
  border-right: 2px solid #000;
}

.data td:nth-child(2),
.data td:nth-child(4) {
  font-weight: 700;
}

.data td:nth-child(2),
.data td:nth-child(3) {
  background: #eeece1;
}

.data td:nth-child(4) {
  padding-right: 1px;
  text-align: right;
  color: #00f;
}

.wide td:nth-child(4) {
  text-align: left;
}

.calc-row td:nth-child(4) {
  color: #000;
}

.inches td:nth-child(6) {
  border-bottom: 2px solid #000;
}

.data.inches td:nth-child(5) {
  border-right: 2px solid #000;
}

.data.inches td:nth-child(6) {
  padding: 0 1px 0 0;
  border-right: 2px solid #000;
  text-align: right;
  font-weight: 700;
}

.export-top td {
  border-bottom: 1px solid #000;
}

.export td {
  background: #cfc;
  border-right: 1px solid #000;
}

.selected {
  position: relative;
}

.selected::before {
  content: "";
  position: absolute;
  inset: -2px -1px -1px -2px;
  border: 2px solid #217346;
}

.selected::after {
  content: "";
  position: absolute;
  right: -3px;
  bottom: -3px;
  width: 6px;
  height: 6px;
  background: #217346;
  border: 1px solid #fff;
  border-width: 1px 0 0 1px;
}

.macro {
  position: absolute;
  top: 46px;
  width: 163px;
  height: 31px;
  background: #f0f0f0;
  border: 1px solid #fff;
  border-right-color: #696969;
  border-bottom-color: #696969;
  box-shadow: inset -1px -1px 0 #a0a0a0;
  font-family: "Open Sans", sans-serif;
  font-size: 12px;
  font-weight: 700;
}

.load {
  left: 26px;
}

.store {
  left: 286px;
}

.chart {
  position: absolute;
  left: 402px;
  top: 216px;
  width: 602px;
  height: 544px;
  font-weight: 700;
}

.tooltip {
  position: absolute;
  left: 900px;
  top: 566px;
  padding: 0 5px 1px;
  background: #fff;
  border: 1px solid #ddd;
  border-radius: 3px;
  box-shadow: 3px 3px 2px #888;
  font-family: "Open Sans", sans-serif;
  line-height: 18px;
  color: #555;
}

/* Scroll bars */
.vscroll,
.hscroll {
  display: flex;
  align-items: center;
  background: #3a3a3a;
  border-radius: 8px;
}

.vscroll {
  flex-direction: column;
  width: 17px;
  margin: 0 2px -3px 3px;
  padding: 5px 0 6px;
}

.hscroll {
  width: 728px;
  height: 17px;
  padding: 0 4px;
}

.thumb {
  background: #c6c6c6;
  border-radius: 5px;
}

.vscroll .thumb {
  width: 10px;
  height: 63%;
  margin: 3px 0 auto;
}

.hscroll .thumb {
  height: 9px;
  flex: 1;
  margin: 0 13px 0 4px;
}

.arrow {
  border: 5px solid transparent;
}

.up {
  border-top: 0;
  border-bottom: 7px solid #c6c6c6;
}

.down {
  border-bottom: 0;
  border-top: 7px solid #c6c6c6;
}

.left {
  border-left: 0;
  border-right: 7px solid #c6c6c6;
}

.right {
  border-right: 0;
  border-left: 7px solid #c6c6c6;
}

/* Sheet tabs */
.sheet-tabs {
  display: flex;
  align-items: center;
  height: 32px;
  padding: 0 20px 0 16px;
  flex: none;
  font-size: 13px;
}

.nav {
  width: 32px;
}

.nav + .sheet-tab {
  margin-left: 36px;
}

.sheet-tab {
  position: relative;
  width: 69px;
  text-align: center;
}

.sheet-tab:not(.active)::after {
  content: "";
  position: absolute;
  right: 0;
  top: -1px;
  width: 1px;
  height: 18px;
  background: #888;
}

.sheet-tab.active {
  width: 55px;
  height: 28px;
  margin-right: 4px;
  align-self: flex-start;
  background: #fff;
  border-radius: 0 0 4px 4px;
  color: #333;
  font-weight: 600;
}

.sheet-tab.active span {
  display: inline-block;
  height: 25px;
  line-height: 26px;
  border-bottom: 2px solid #107c41;
}

.add {
  margin-left: 41px;
}

.sheet-tabs .dots {
  margin: 0 8px 0 auto;
}

/* Status bar */
.status {
  display: flex;
  align-items: center;
  height: 23px;
  padding: 0 8px 0 11px;
  flex: none;
  background: #505050;
  border-top: 1px solid #3a3a3a;
  font-size: 11px;
}

.access {
  display: flex;
  align-items: center;
  gap: 3px;
  margin-left: 20px;
}

.views {
  display: flex;
  margin-left: auto;
}

.views button {
  width: 40px;
  height: 22px;
}

.views .on {
  background: #5e5e5e;
}

.zoom {
  display: flex;
  align-items: center;
  gap: 5px;
  margin-left: 5px;
}

.zoom span {
  font-size: 14px;
}

.zoom input {
  appearance: none;
  width: 100px;
  height: 12px;
  background: linear-gradient(#bbb, #bbb) center / 100% 1px no-repeat;
}

.zoom input::-webkit-slider-thumb {
  appearance: none;
  width: 4px;
  height: 11px;
  background: #c6c6c6;
}

.percent {
  width: 40px;
  text-align: right;
}
```
